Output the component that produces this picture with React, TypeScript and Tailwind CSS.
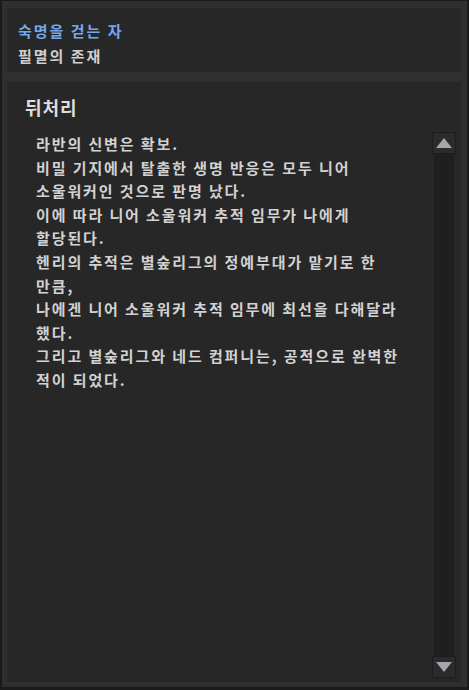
import React from "react";

const lines = [
  "라반의 신변은 확보.",
  "비밀 기지에서 탈출한 생명 반응은 모두 니어",
  "소울워커인 것으로 판명 났다.",
  "이에 따라 니어 소울워커 추적 임무가 나에게",
  "할당된다.",
  "헨리의 추적은 별숲리그의 정예부대가 맡기로 한",
  "만큼,",
  "나에겐 니어 소울워커 추적 임무에 최선을 다해달라",
  "했다.",
  "그리고 별숲리그와 네드 컴퍼니는, 공적으로 완벽한",
  "적이 되었다.",
];

function ScrollBtn({ up }: { up: boolean }) {
  return (
    <div className="w-[24px] h-[22px] bg-[#2b2b2b] border border-[#1c1c1c] flex items-center justify-center">
      <svg width="16" height="10" viewBox="0 0 16 10">
        {up ? (
          <polygon points="8,0 16,10 0,10" fill="#a8a4ae" />
        ) : (
          <polygon points="0,0 16,0 8,10" fill="#a8a4ae" />
        )}
      </svg>
    </div>
  );
}

export default function App() {
  return (
    <div
      className="w-[469px] h-[690px] bg-[#1a1a1a] pt-[1px] pl-[2px] pr-[2px] pb-[3px]"
      style={{ fontFamily: '"Noto Sans CJK KR", "Noto Sans", sans-serif' }}
    >
      <div className="w-full h-full bg-[#2f2f2f] pt-[7px] pl-[5px] pr-[6px] pb-[5px] flex flex-col gap-[10px]">
        <div className="h-[64px] bg-[#272727] pl-[11px] pt-[10px] text-[15px] leading-[25px] font-bold tracking-[2px]">
          <div className="text-[#74a8ee]">숙명을 걷는 자</div>
          <div className="text-[#cfcfcf]">필멸의 존재</div>
        </div>
        <div className="flex-1 bg-[#272727] flex flex-col min-h-0">
          <div className="pl-[18px] pt-[13px] h-[37px] text-[18px] leading-[24px] font-bold tracking-[1px] text-[#dedede]">
            뒤처리
          </div>
          <div className="mt-[13px] flex-1 flex min-h-0 pb-[4px] pr-[5px]">
            <div className="flex-1 pl-[29px] text-[15px] leading-[23.6px] font-bold tracking-[1.9px] text-[#d2d2d2] whitespace-nowrap">
              {lines.map((l, i) => (
                <div key={i}>{l}</div>
              ))}
            </div>
            <div className="w-[24px] flex flex-col">
              <ScrollBtn up />
              <div className="flex-1 mx-[2px] bg-[#1f1f1f]" />
              <ScrollBtn up={false} />
            </div>
          </div>
        </div>
      </div>
    </div>
  );
}
